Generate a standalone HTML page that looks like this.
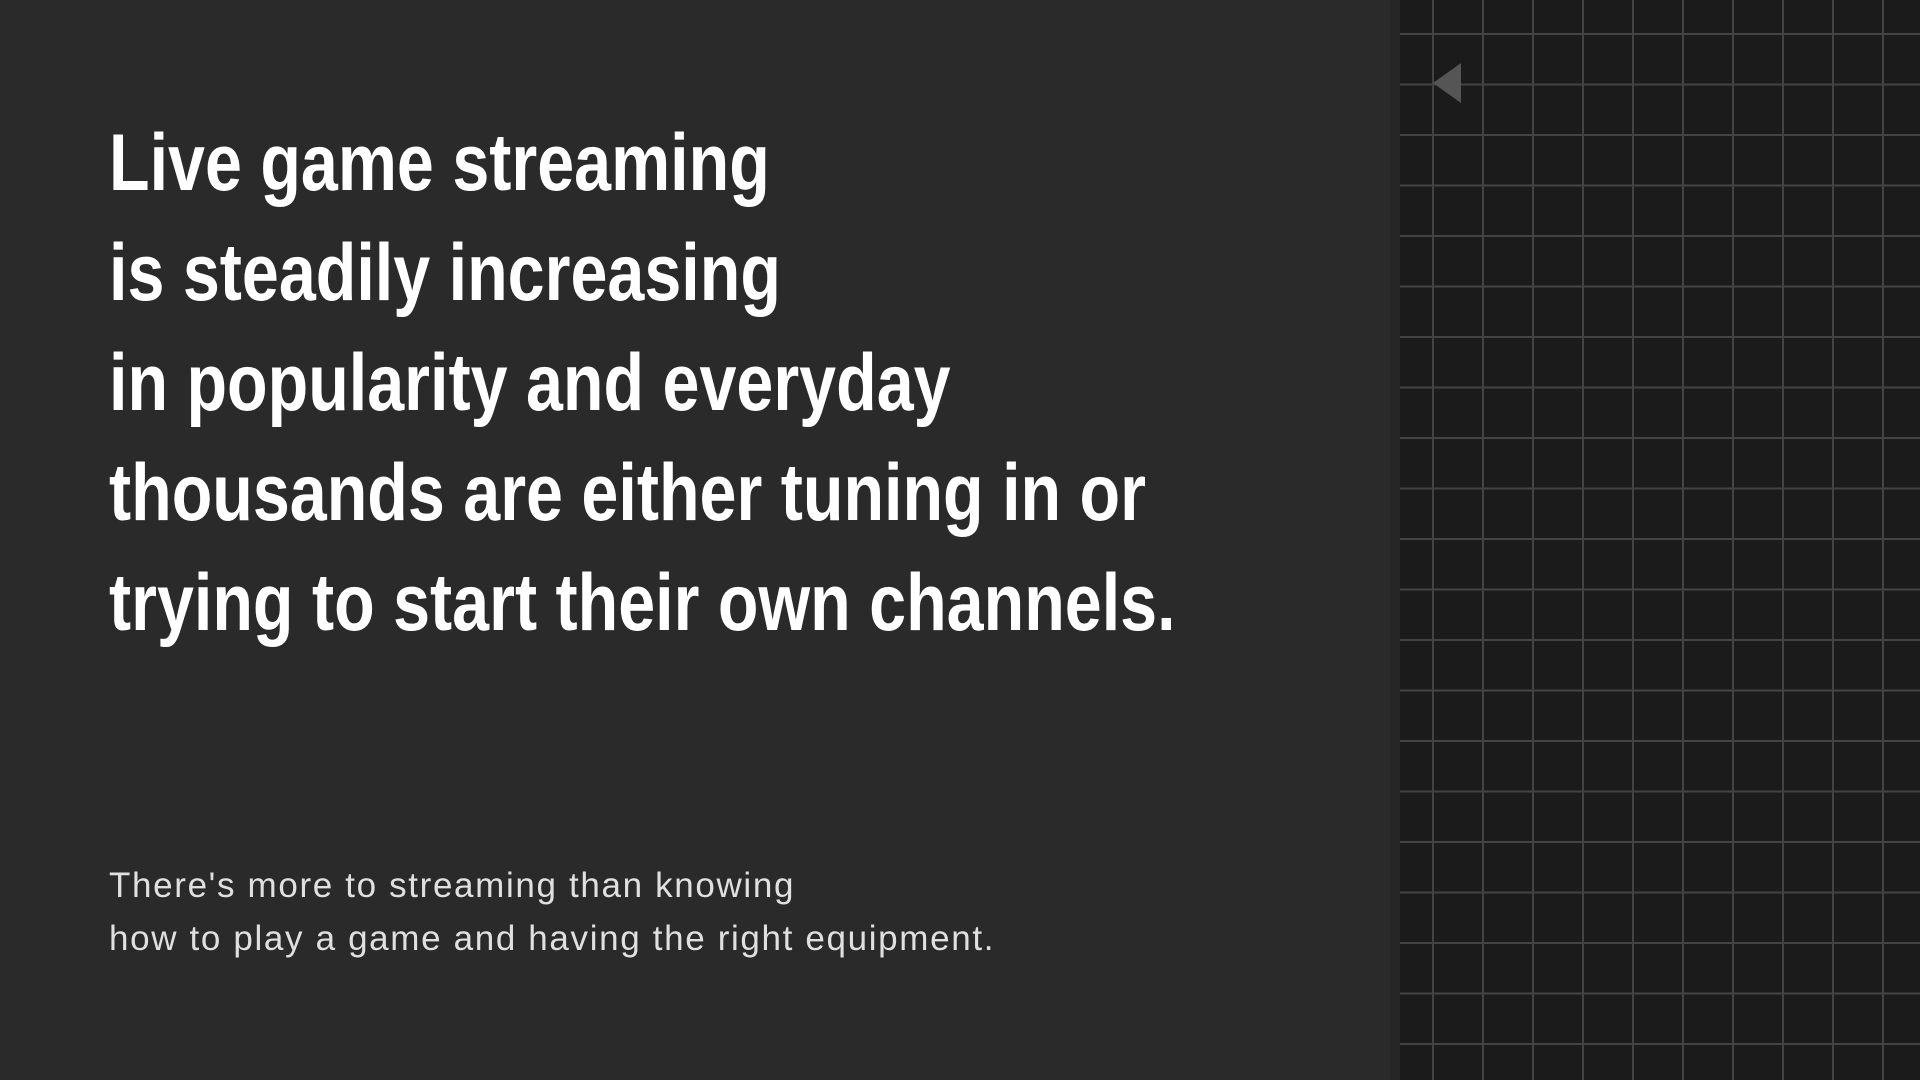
<!DOCTYPE html>
<html><head><style>
html,body{margin:0;padding:0;width:1920px;height:1080px;overflow:hidden;background:#2a2a2a}
.left{position:absolute;left:0;top:0;width:1390px;height:1080px;background:#2a2a2a}
.right{position:absolute;left:1400px;top:0;width:520px;height:1080px;background-color:#1b1b1b;
background-image:linear-gradient(to right,#434343 2px,transparent 2px),linear-gradient(to bottom,#434343 2px,transparent 2px);
background-size:50px 50.5px;background-position:32px 33px}
.sep{position:absolute;left:1390px;top:0;width:10px;height:1080px;background:#262626}
h1{position:absolute;left:109px;top:108px;margin:0;font-family:"Liberation Sans",sans-serif;font-weight:bold;font-size:81px;line-height:110px;color:#fff;white-space:nowrap;transform:scaleX(0.82);transform-origin:0 0}
p{position:absolute;left:109px;top:859px;margin:0;font-family:"Liberation Sans",sans-serif;font-size:35px;line-height:53px;color:#e0e0e0;letter-spacing:1.65px;white-space:nowrap}
</style></head><body>
<div class="left"></div><div class="sep"></div><div class="right"></div>
<svg style="position:absolute;left:1430px;top:60px" width="36" height="46"><polygon points="3,23 31,3 31,43" fill="#555"/></svg>
<h1>Live game streaming<br>is steadily increasing<br>in popularity and everyday<br>thousands are either tuning in or<br>trying to start their own channels.</h1>
<p>There's more to streaming than knowing<br>how to play a game and having the right equipment.</p>
</body></html>
